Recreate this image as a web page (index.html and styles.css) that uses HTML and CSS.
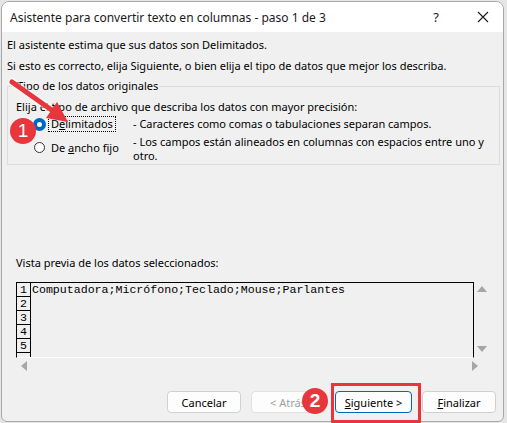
FILE: index.html
```html
<!DOCTYPE html>
<html lang="es">
<head>
    <meta charset="UTF-8">
    <meta name="viewport" content="width=device-width, initial-scale=1.0">
    <title>Asistente para convertir texto en columnas</title>
    <link rel="stylesheet" href="styles.css">
</head>
<body>
    <div class="window">
        <div class="titlebar">
            <span class="title">Asistente para convertir texto en columnas - paso 1 de 3</span>
            <span class="help">?</span>
            <svg class="close" width="12" height="12" viewBox="0 0 12 12">
                <path d="M1 1 L11 11 M11 1 L1 11" stroke="#1a1a1a" stroke-width="1.1" fill="none"/>
            </svg>
        </div>

        <div class="content">
            <p class="intro">El asistente estima que sus datos son Delimitados.</p>
            <p class="intro second">Si esto es correcto, elija Siguiente, o bien elija el tipo de datos que mejor los describa.</p>

            <fieldset class="group">
                <legend>Tipo de los datos originales</legend>
                <p class="hint">Elija el tipo de archivo que describa los datos con mayor precisión:</p>

                <div class="option">
                    <div class="choice">
                        <span class="radio checked"></span>
                        <span class="focus">D<u>e</u>limitados</span>
                    </div>
                    <div class="desc">- Caracteres como comas o tabulaciones separan campos.</div>
                </div>

                <div class="option option-two">
                    <div class="choice">
                        <span class="radio"></span>
                        <span class="plain">De <u>a</u>ncho fijo</span>
                    </div>
                    <div class="desc">- Los campos están alineados en columnas con espacios entre uno y otro.</div>
                </div>
            </fieldset>

            <p class="preview-label">Vista previa de los datos seleccionados:</p>

            <div class="preview-row">
                <div class="preview">
                    <div class="line"><span class="num">1</span><span class="data">Computadora;Micrófono;Teclado;Mouse;Parlantes</span></div>
                    <div class="line"><span class="num">2</span><span class="data"></span></div>
                    <div class="line"><span class="num">3</span><span class="data"></span></div>
                    <div class="line"><span class="num">4</span><span class="data"></span></div>
                    <div class="line"><span class="num">5</span><span class="data"></span></div>
                    <div class="line"><span class="num"></span><span class="data"></span></div>
                </div>
                <div class="vscroll">
                    <span class="tri up"></span>
                    <span class="tri down"></span>
                </div>
            </div>
            <div class="hscroll">
                <span class="tri left"></span>
                <span class="tri right"></span>
            </div>

            <div class="buttons">
                <button type="button">Cancelar</button>
                <button type="button" class="disabled">&lt; Atrás</button>
                <button type="button" class="default"><u>S</u>iguiente &gt;</button>
                <button type="button"><u>F</u>inalizar</button>
            </div>
        </div>
    </div>

    <!-- anotaciones del tutorial -->
    <svg class="arrow" width="80" height="60" viewBox="0 0 80 60">
        <path d="M9 4 L50 33" stroke="#fff" stroke-width="8" stroke-linecap="round" fill="none" opacity="0.5"/>
        <path d="M9 4 L50 33" stroke="#e8363d" stroke-width="5" stroke-linecap="round" fill="none"/>
        <polygon points="65,44 43,40 54,24" fill="#e8363d"/>
    </svg>
    <span class="badge badge-one">1</span>
    <span class="badge badge-two">2</span>
    <span class="highlight"></span>
</body>
</html>
```

FILE: styles.css
```css
body {
    margin: 0;
    width: 507px;
    height: 423px;
    overflow: hidden;
    background: #e6e6e6;
    font-family: "Noto Sans", Arial, sans-serif;
    font-size: 11px;
    color: #000;
    position: relative;
}
p {
    margin: 0;
}
.window {
    margin: 1px 0 0 1px;
    width: 503px;
    height: 421px;
    box-sizing: border-box;
    border: 1px solid #a8a8a8;
    border-radius: 8px 8px 6px 6px;
    background: #f0f0f0;
    overflow: hidden;
}
.titlebar {
    height: 30px;
    background: #fff;
    display: flex;
    align-items: center;
    padding-left: 8px;
}
.title {
    font-size: 12px;
    color: #1a1a1a;
    flex: 1;
}
.help {
    font-size: 13px;
    color: #1a1a1a;
    margin-right: 38px;
}
.close {
    margin-right: 14px;
}
.content {
    padding: 5px 3px 0 5px;
}
.intro {
    line-height: 16px;
}
.intro.second {
    margin-top: 5px;
}
.group {
    margin: 4px 0 0;
    padding: 5px 0 0 8px;
    height: 87px;
    box-sizing: border-box;
    border: 1px solid #dcdcdc;
}
.group legend {
    padding: 0 1px;
    line-height: 16px;
}
.hint {
    line-height: 16px;
}
.option {
    display: grid;
    grid-template-columns: 117px 1fr;
    height: 18px;
    align-items: center;
}
.option-two {
    margin-top: 4px;
    align-items: start;
    height: auto;
}
.choice {
    display: flex;
    align-items: center;
    height: 18px;
    padding-left: 18px;
}
.option-two .choice {
    margin-top: 1px;
}
.radio {
    width: 11px;
    height: 11px;
    border: 1px solid #333;
    border-radius: 50%;
    box-sizing: border-box;
    background: #fff;
    margin-right: 4px;
}
.radio.checked {
    border: 4px solid #0067c0;
    width: 13px;
    height: 13px;
    margin-left: -1px;
    margin-right: 3px;
}
.focus {
    outline: 1px dotted #000;
    padding: 0 2px;
    line-height: 14px;
}
.plain {
    padding: 0 2px;
}
.desc {
    line-height: 14px;
    padding-right: 8px;
}
.option-two .desc {
    margin-top: -2px;
}
.preview-label {
    margin: 90px 0 0 9px;
    line-height: 16px;
}
.preview-row {
    display: flex;
    margin-top: 11px;
    margin-left: 9px;
}
.preview {
    width: 458px;
    height: 76px;
    box-sizing: border-box;
    border: 1px solid #000;
    border-bottom: 1px solid #fff;
    overflow: hidden;
    font-family: "Liberation Mono", "Courier New", monospace;
    font-size: 11.6px;
}
.line {
    display: flex;
    height: 14px;
    line-height: 14px;
}
.num {
    width: 13px;
    border-right: 1px solid #000;
    border-bottom: 1px solid #000;
    text-align: center;
    flex: none;
}
.data {
    padding-left: 1px;
}
.vscroll {
    width: 14px;
    display: flex;
    flex-direction: column;
    justify-content: space-between;
    align-items: center;
    padding: 4px 0 6px 0;
    margin-left: 1px;
}
.hscroll {
    display: flex;
    justify-content: space-between;
    margin: 3px 0 0 14px;
    width: 457px;
}
.tri {
    width: 0;
    height: 0;
    border: 5px solid transparent;
}
.tri.up {
    border-bottom: 6px solid #a6a6a6;
    border-top-width: 0;
}
.tri.down {
    border-top: 6px solid #a6a6a6;
    border-bottom-width: 0;
}
.tri.left {
    border-right: 6px solid #a6a6a6;
    border-left-width: 0;
}
.tri.right {
    border-left: 6px solid #a6a6a6;
    border-right-width: 0;
}
.buttons {
    display: flex;
    justify-content: flex-end;
    gap: 10px;
    margin-top: 20px;
    padding-right: 4px;
}
button {
    width: 74px;
    height: 22px;
    font-family: "Noto Sans", Arial, sans-serif;
    font-size: 11px;
    color: #000;
    background: #fdfdfd;
    border: 1px solid #d0d0d0;
    border-radius: 4px;
    padding: 0;
}
button.disabled {
    color: #a0a0a0;
    border-color: #e0e0e0;
}
button.default {
    width: 77px;
    border-color: #0067c0;
}
.arrow {
    position: absolute;
    left: 3px;
    top: 78px;
}
.badge {
    position: absolute;
    width: 26px;
    height: 26px;
    border-radius: 50%;
    background: #e8363d;
    color: #fff;
    font-family: "Liberation Sans", Arial, sans-serif;
    font-size: 19px;
    line-height: 26px;
    text-align: center;
}
.badge-one {
    left: 10px;
    top: 118px;
}
.badge-two {
    left: 302px;
    top: 388px;
    font-weight: bold;
}
.highlight {
    position: absolute;
    left: 331px;
    top: 383px;
    width: 90px;
    height: 40px;
    box-sizing: border-box;
    border: 3px solid #e8363d;
}
```
